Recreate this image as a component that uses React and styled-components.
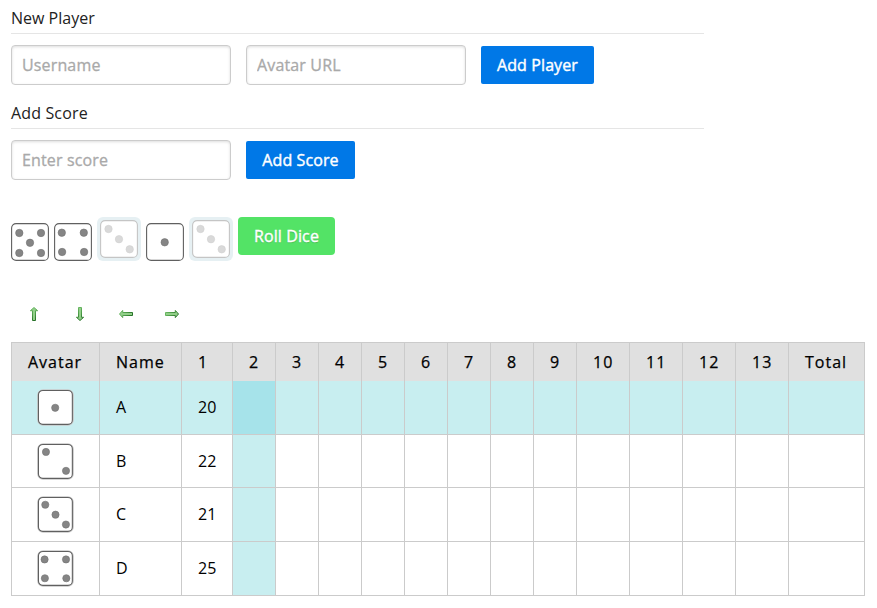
import React from "react";
import styled, { createGlobalStyle } from "styled-components";

const GlobalStyle = createGlobalStyle`
  * { box-sizing: border-box; }
  body {
    margin: 0;
    background: #fff;
    color: #000;
    font: 400 16px/24px "Open Sans", "Noto Sans", sans-serif;
  }
`;

const Page = styled.main`
  width: 877px;
  height: 608px;
  overflow: hidden;
  padding: 6px 11px 0;
`;

const Form = styled.form`
  width: 693px;
  height: ${(p) => p.$height}px;
`;

const Legend = styled.h2`
  margin: 0 0 11px;
  height: 28px;
  border-bottom: 1px solid #e5e5e5;
  color: #222;
  font-size: 16px;
  font-weight: 400;
  line-height: 24px;
  letter-spacing: ${(p) => p.$tracking || 0}px;
`;

const Fields = styled.div`
  display: flex;
  align-items: center;
  gap: 15px;
`;

const Input = styled.input`
  width: 220px;
  height: 40px;
  padding: 0 10px;
  border: 1px solid #ccc;
  border-radius: 4px;
  box-shadow: inset 0 1px 3px #ddd;
  font: inherit;
  letter-spacing: 0.15px;
  &::placeholder {
    color: #a9a9a9;
    opacity: 1;
    -webkit-text-stroke: 0.3px #a9a9a9;
  }
`;

const Button = styled.button`
  width: ${(p) => p.$width}px;
  height: 38px;
  padding: 0;
  border: 0;
  border-radius: 2px;
  background: #0078e7;
  color: #fff;
  font: inherit;
  letter-spacing: 0.1px;
  -webkit-text-stroke: 0.4px #fff;
  white-space: nowrap;
`;

const RollButton = styled(Button)`
  margin-left: 5px;
  border-radius: 4px;
  background: #53e366;
  text-shadow: 0 1px 1px rgba(0, 0, 0, 0.2);
`;

const DiceRow = styled.div`
  display: flex;
  align-items: flex-start;
  height: 89px;
`;

const DieSlot = styled.div`
  display: flex;
  margin: ${(p) => (p.$held ? "0 5px 0 0" : "6px 5px 0 0")};
  padding: ${(p) => (p.$held ? "3px" : "0")};
  border-radius: 6px;
  background: ${(p) => (p.$held ? "#e6f0f3" : "transparent")};
  &:last-of-type { margin-right: 0; }
`;

const DieSvg = styled.svg`
  display: block;
`;

const Arrows = styled.nav`
  display: flex;
  gap: 30px;
  height: 36px;
  padding-left: 15px;
`;

const ArrowButton = styled.button`
  display: flex;
  width: 16px;
  height: 16px;
  padding: 0;
  border: 0;
  background: none;
`;

const ScoreTable = styled.table`
  width: 854px;
  table-layout: fixed;
  border-spacing: 0;
  border: solid #cbcbcb;
  border-width: 1px 1px 0 0;
`;

const Col = styled.col`
  width: ${(p) => p.$width}px;
`;

const HeadCell = styled.th`
  height: 38px;
  padding: 0 0 0 16px;
  border-left: 1px solid #cbcbcb;
  background: #e0e0e0;
  font-weight: 400;
  -webkit-text-stroke: 0.25px #000;
  letter-spacing: 1px;
  text-align: left;
`;

const Row = styled.tr`
  height: ${(p) => p.$height}px;
  background: ${(p) => (p.$active ? "#c8eef0" : "#fff")};
`;

const Cell = styled.td`
  padding: 0 0 1px 16px;
  border: solid #cbcbcb;
  border-width: 0 0 1px 1px;
  background: ${(p) => (p.$cross ? "#a6e3ea" : p.$column ? "#c8eef0" : "transparent")};
  background-clip: padding-box;
`;

const AvatarCell = styled(Cell)`
  padding: 0 0 0 25px;
`;

const PIPS = {
  1: [[18.7, 19.3]],
  2: [[9.2, 9.2], [29.8, 28.6]],
  3: [[8.5, 9], [19, 19.2], [29.7, 29.3]],
  4: [[7.8, 9.7], [29.8, 9.7], [8.1, 29], [30.1, 29]],
  5: [[8.3, 10], [30, 10], [19, 19.8], [8.3, 30], [30, 30]],
};

function Die({ value, held, size = 38, framed }) {
  const pip = held ? "#d9d9d9" : "#858585";
  return (
    <DieSvg width={size} height={size} viewBox="0 0 38 38" aria-label={`Die ${value}`}>
      {framed && <rect x="0.2" y="0.2" width="37.6" height="37.6" rx="6" fill="#c8c8c8" />}
      <rect
        x={framed ? 1.5 : 0.6}
        y={framed ? 1.5 : 0.6}
        width={framed ? 34.8 : 36.8}
        height={framed ? 34.8 : 36.8}
        rx="4.5"
        fill="#fff"
        stroke={held ? "#c5c5c5" : "#606060"}
        strokeWidth="1.1"
      />
      {PIPS[value].map(([x, y]) => (
        <circle key={`${x}-${y}`} cx={x} cy={y} r="3.7" fill={pip} stroke={held ? "#d0d0d0" : "#707070"} strokeWidth="0.6" />
      ))}
    </DieSvg>
  );
}

function Arrow({ direction }) {
  const vertical = direction === "up" || direction === "down";
  const paths = {
    up: "M8 1.5 L11.6 4.7 H9.5 V14.5 H6.5 V4.7 H4.4 Z",
    down: "M6.5 1.5 H9.5 V11.3 H11.6 L8 14.5 L4.4 11.3 H6.5 Z",
    left: "M1.5 8 L4.7 4.4 V6.5 H14.5 V9.5 H4.7 V11.6 Z",
    right: "M1.5 6.5 H11.3 V4.4 L14.5 8 L11.3 11.6 V9.5 H1.5 Z",
  };
  const id = `arrow-${direction}`;
  return (
    <ArrowButton type="button" aria-label={direction}>
      <svg width="16" height="16" viewBox="0 0 16 16">
        <defs>
          <linearGradient id={id} gradientUnits="userSpaceOnUse" x1={vertical ? 5 : 1} y1={vertical ? 1 : 5} x2={vertical ? 11 : 15} y2={vertical ? 15 : 11}>
            <stop offset="0" stopColor="#6fbd68" />
            <stop offset="0.5" stopColor="#4a9845" />
            <stop offset="1" stopColor="#1d6620" />
          </linearGradient>
        </defs>
        <path d={paths[direction]} fill="#91cf88" stroke={`url(#${id})`} />
      </svg>
    </ArrowButton>
  );
}

const DICE = [[5, false], [4, false], [3, true], [1, false], [3, true]];
const WIDTHS = [88, 82, 51, 43, 43, 43, 43, 43, 43, 43, 43, 53, 53, 53, 53, 76];
const TURNS = Array.from({ length: 13 }, (_, i) => i + 1);
const HEADERS = ["Avatar", "Name", ...TURNS, "Total"];
const PLAYERS = [
  { name: "A", score: 20, die: 1, height: 54 },
  { name: "B", score: 22, die: 2, height: 53 },
  { name: "C", score: 21, die: 3, height: 54 },
  { name: "D", score: 25, die: 4, height: 54 },
];

export default function App() {
  return (
    <>
      <GlobalStyle />
      <Page>
        <Form $height={95}>
          <Legend>New Player</Legend>
          <Fields>
            <Input placeholder="Username" />
            <Input placeholder="Avatar URL" />
            <Button type="button" $width={113}>Add Player</Button>
          </Fields>
        </Form>
        <Form $height={116}>
          <Legend $tracking={0.15}>Add Score</Legend>
          <Fields>
            <Input placeholder="Enter score" />
            <Button type="button" $width={109}>Add Score</Button>
          </Fields>
        </Form>
        <DiceRow>
          {DICE.map(([value, held], i) => (
            <DieSlot key={i} $held={held}>
              <Die value={value} held={held} />
            </DieSlot>
          ))}
          <RollButton type="button" $width={97}>Roll Dice</RollButton>
        </DiceRow>
        <Arrows>
          {["up", "down", "left", "right"].map((d) => <Arrow key={d} direction={d} />)}
        </Arrows>
        <ScoreTable>
          <colgroup>{WIDTHS.map((w, i) => <Col key={i} $width={w} />)}</colgroup>
          <thead>
            <tr>{HEADERS.map((h) => <HeadCell key={h}>{h}</HeadCell>)}</tr>
          </thead>
          <tbody>
            {PLAYERS.map((p, i) => (
              <Row key={p.name} $active={i === 0} $height={p.height}>
                <AvatarCell><Die value={p.die} size={37} framed /></AvatarCell>
                <Cell>{p.name}</Cell>
                {TURNS.map((t) => (
                  <Cell key={t} $column={t === 2} $cross={t === 2 && i === 0}>
                    {t === 1 ? p.score : null}
                  </Cell>
                ))}
                <Cell />
              </Row>
            ))}
          </tbody>
        </ScoreTable>
      </Page>
    </>
  );
}
